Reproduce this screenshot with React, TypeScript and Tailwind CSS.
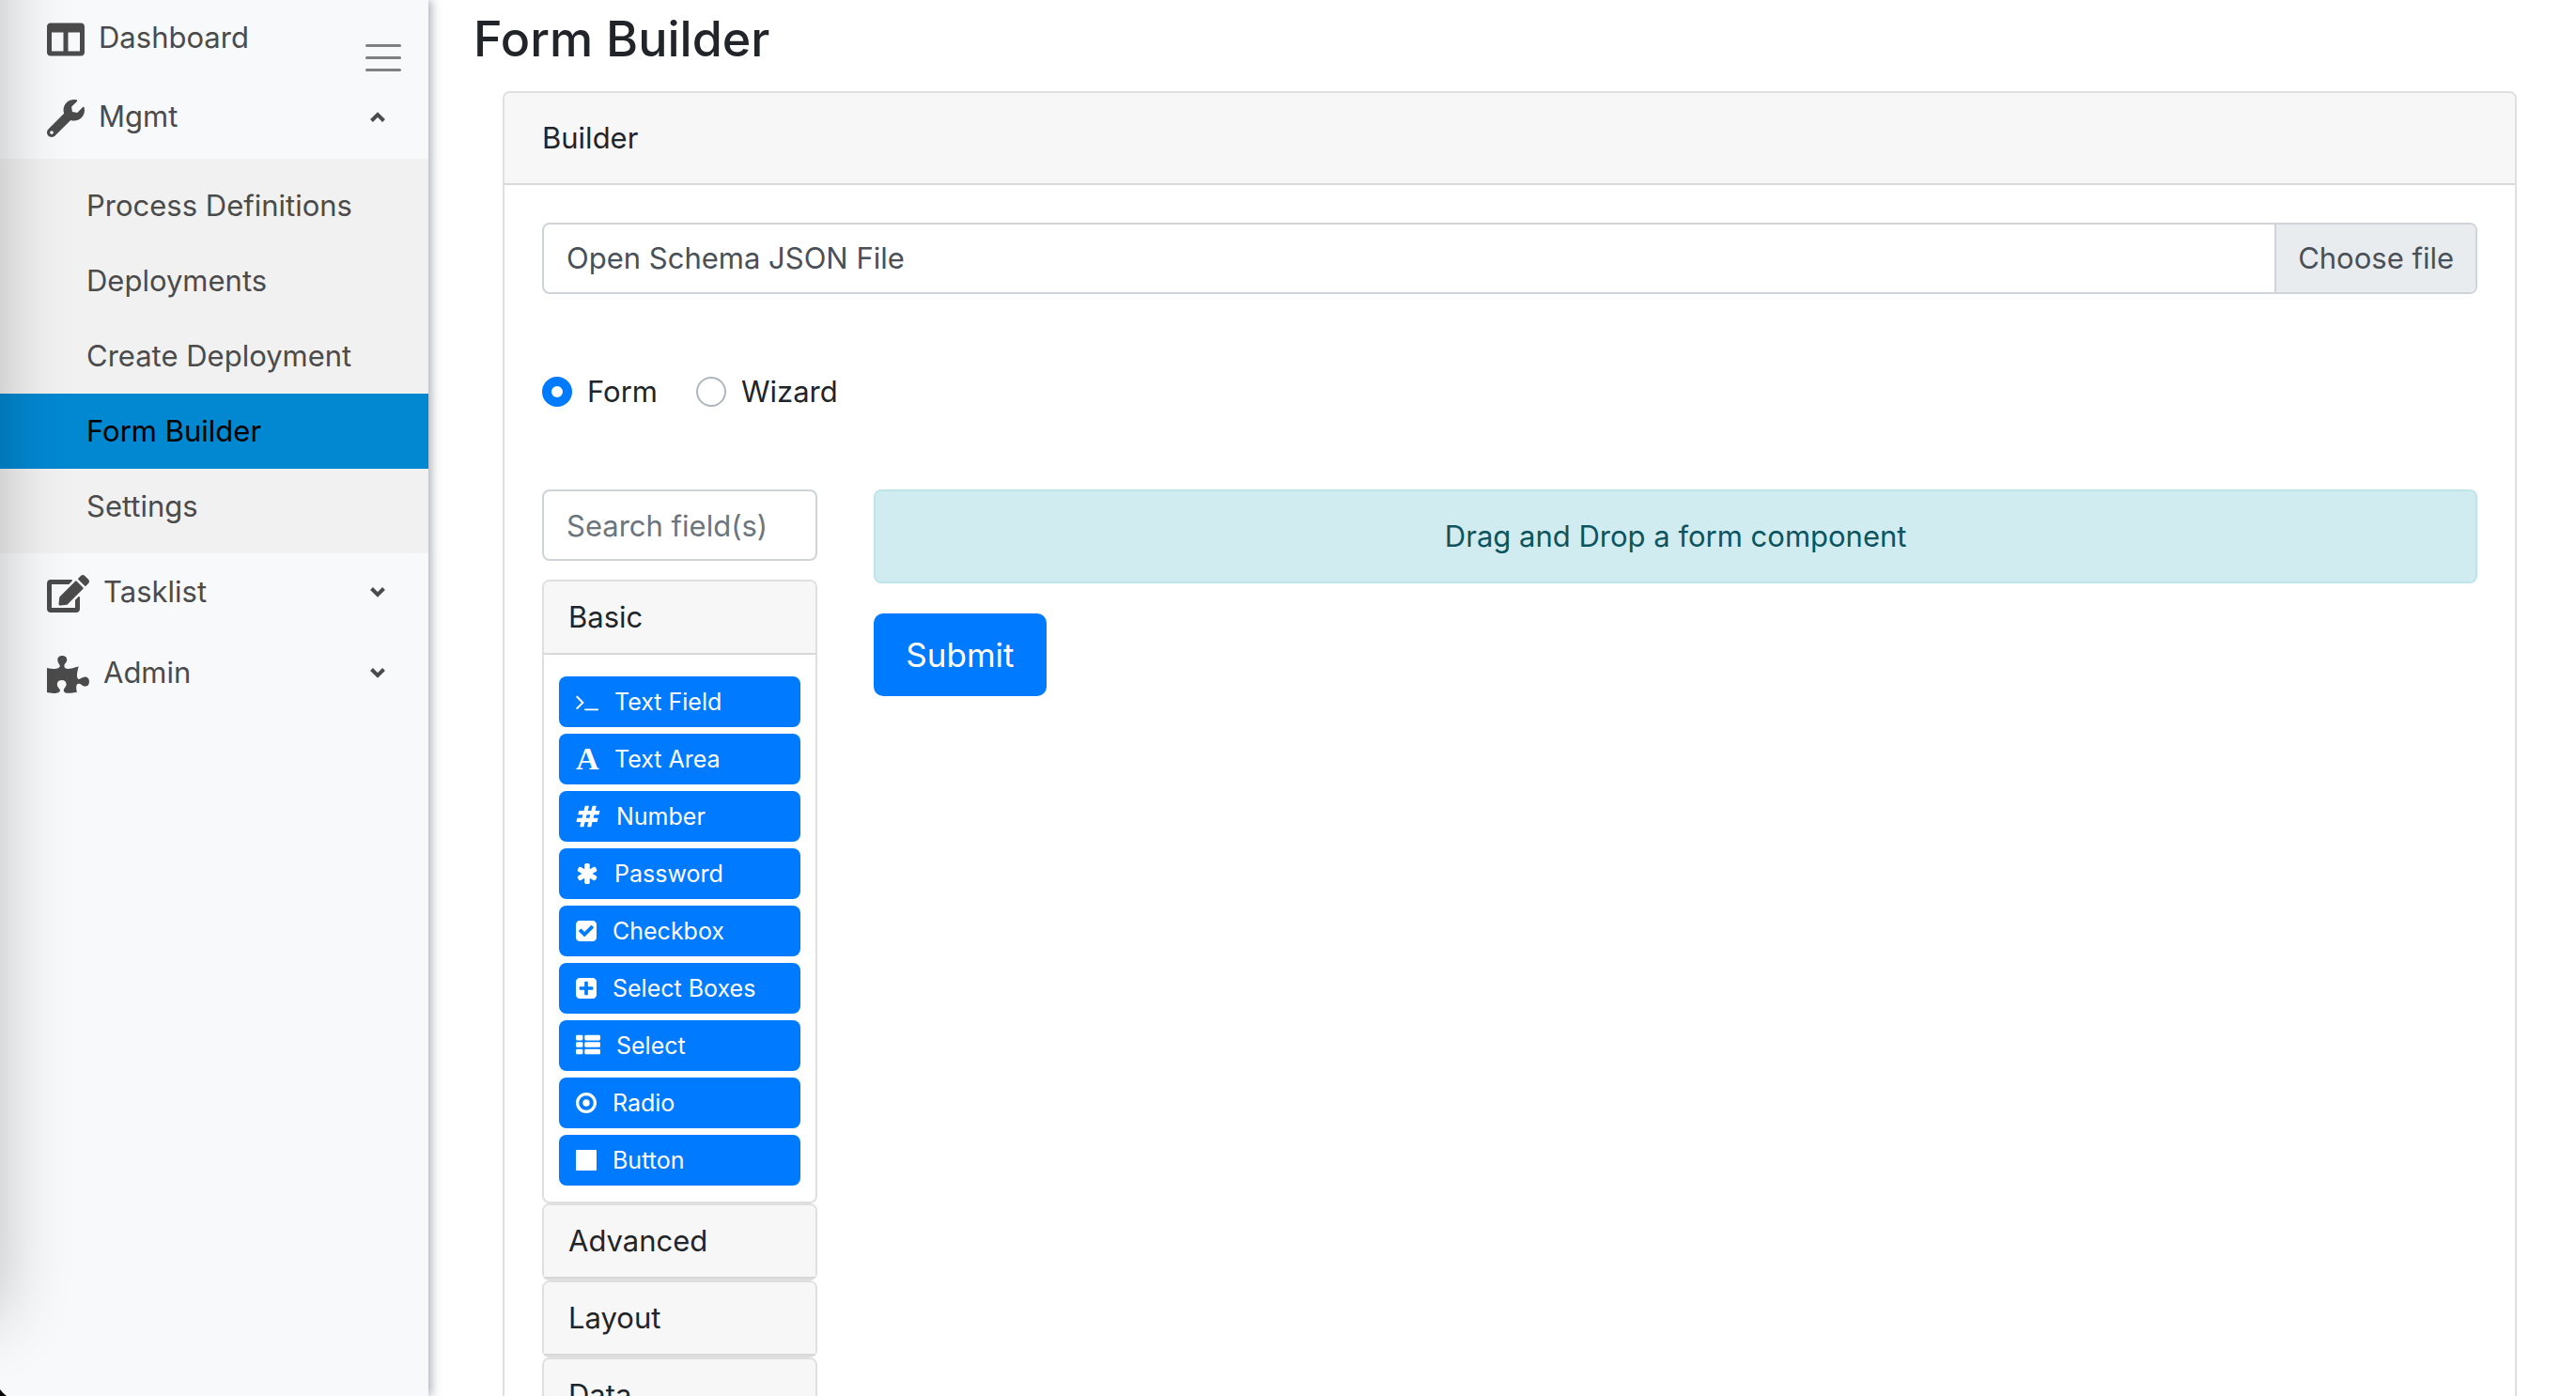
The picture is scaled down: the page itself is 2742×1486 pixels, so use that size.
import React, { useState } from "react";
import { FaColumns, FaEdit, FaPuzzlePiece, FaWrench } from "react-icons/fa";

const SQUARE =
  "M1664 416v960q0 119-84.5 203.5t-203.5 84.5h-960q-119 0-203.5-84.5t-84.5-203.5v-960q0-119 84.5-203.5t203.5-84.5h960q119 0 203.5 84.5t84.5 203.5z";

function Glyph({ box, className, d }: { box: string; className: string; d: string }) {
  return (
    <svg viewBox={box} className={className} fill="currentColor" fillRule="evenodd" aria-hidden="true">
      <path d={d} />
    </svg>
  );
}

const BASIC_FIELDS: { label: string; icon: React.ReactNode }[] = [
  {
    label: "Text Field",
    icon: (
      <Glyph
        box="0 0 1664 1792"
        className="h-[26px] w-6"
        d="M585 983l-466 466q-10 10-23 10t-23-10l-50-50q-10-10-10-23t10-23l393-393-393-393q-10-10-10-23t10-23l50-50q10-10 23-10t23 10l466 466q10 10 10 23t-10 23zM1664 1440v64q0 14-9 23t-23 9h-960q-14 0-23-9t-9-23v-64q0-14 9-23t23-9h960q14 0 23 9t9 23z"
      />
    ),
  },
  {
    label: "Text Area",
    icon: (
      <span
        aria-hidden="true"
        className="w-6 text-center font-['Liberation_Serif',serif] text-[34px] leading-[26px] font-bold"
      >
        A
      </span>
    ),
  },
  {
    label: "Number",
    icon: (
      <Glyph
        box="0 0 1792 1792"
        className="h-[26px] w-[26px]"
        d="M991 1024l64-256h-254l-64 256h254zm768-504l-56 224q-7 24-31 24h-327l-64 256h311q15 0 25 12 10 14 6 28l-56 224q-5 24-31 24h-327l-81 328q-7 24-31 24h-224q-16 0-26-12-9-12-6-28l78-312h-254l-81 328q-7 24-31 24h-225q-15 0-25-12-9-12-6-28l78-312h-311q-15 0-25-12-9-12-6-28l56-224q7-24 31-24h327l64-256h-311q-15 0-25-12-10-14-6-28l56-224q5-24 31-24h327l81-328q7-24 32-24h224q15 0 25 12 9 12 6 28l-78 312h254l81-328q7-24 32-24h224q15 0 25 12 9 12 6 28l-78 312h311q15 0 25 12 9 12 6 28z"
      />
    ),
  },
  {
    label: "Password",
    icon: (
      <Glyph
        box="64 0 1664 1792"
        className="h-[26px] w-6"
        d="M1546 1050q46 26 59.5 77.5t-12.5 97.5l-64 110q-26 46-77.5 59.5t-97.5-12.5l-266-153v307q0 52-38 90t-90 38h-128q-52 0-90-38t-38-90v-307l-266 153q-46 26-97.5 12.5t-77.5-59.5l-64-110q-26-46-12.5-97.5t59.5-77.5l266-154-266-154q-46-26-59.5-77.5t12.5-97.5l64-110q26-46 77.5-59.5t97.5 12.5l266 153v-307q0-52 38-90t90-38h128q52 0 90 38t38 90v307l266-153q46-26 97.5-12.5t77.5 59.5l64 110q26 46 12.5 97.5t-59.5 77.5l-266 154z"
      />
    ),
  },
  {
    label: "Checkbox",
    icon: (
      <Glyph
        box="128 0 1536 1792"
        className="h-[26px] w-[22px]"
        d={
          "M813 1299l614-614q19-19 19-45t-19-45l-102-102q-19-19-45-19t-45 19l-467 467-211-211q-19-19-45-19t-45 19l-102 102q-19 19-19 45t19 45l358 358q19 19 45 19t45-19z" +
          SQUARE
        }
      />
    ),
  },
  {
    label: "Select Boxes",
    icon: (
      <Glyph
        box="128 0 1536 1792"
        className="h-[26px] w-[22px]"
        d={
          "M1408 960v-128q0-26-19-45t-45-19h-320v-320q0-26-19-45t-45-19h-128q-26 0-45 19t-19 45v320h-320q-26 0-45 19t-19 45v128q0 26 19 45t45 19h320v320q0 26 19 45t45 19h128q26 0 45-19t19-45v-320h320q26 0 45-19t19-45z" +
          SQUARE
        }
      />
    ),
  },
  {
    label: "Select",
    icon: (
      <svg viewBox="0 0 1792 1792" className="h-[26px] w-[26px]" fill="currentColor" aria-hidden="true">
        {[128, 640, 1152].map((y) => (
          <React.Fragment key={y}>
            <rect x="0" y={y} width="512" height="384" rx="96" />
            <rect x="640" y={y} width="1152" height="384" rx="96" />
          </React.Fragment>
        ))}
      </svg>
    ),
  },
  {
    label: "Radio",
    icon: (
      <svg viewBox="128 0 1536 1792" className="h-[26px] w-[22px]" aria-hidden="true">
        <circle cx="896" cy="896" r="656" fill="none" stroke="currentColor" strokeWidth="224" />
        <circle cx="896" cy="896" r="256" fill="currentColor" />
      </svg>
    ),
  },
  {
    label: "Button",
    icon: (
      <svg viewBox="128 0 1536 1792" className="h-[26px] w-[22px]" fill="currentColor" aria-hidden="true">
        <rect x="128" y="128" width="1536" height="1536" rx="48" />
      </svg>
    ),
  },
];

const MGMT_ITEMS = ["Process Definitions", "Deployments", "Create Deployment", "Form Builder", "Settings"];

function Chevron({ up = false }: { up?: boolean }) {
  return (
    <svg
      viewBox="0 0 16 11"
      className="mb-1 ml-auto h-[11px] w-4"
      fill="none"
      stroke="currentColor"
      strokeWidth="4"
      aria-hidden="true"
    >
      <path d={up ? "M1.5 9.5 8 3l6.5 6.5" : "M1.5 1.5 8 8l6.5-6.5"} />
    </svg>
  );
}

function NavGroup({ icon, label, up }: { icon: React.ReactNode; label: string; up?: boolean }) {
  return (
    <button type="button" aria-expanded={!!up} className="flex h-[86px] w-full items-center gap-[15px] pr-[46px] pl-[50px]">
      {icon}
      <span className="pb-1">{label}</span>
      <Chevron up={up} />
    </button>
  );
}

function Sidebar() {
  return (
    <aside className="relative z-10 h-full w-[456px] shrink-0 bg-[#f8f9fb] text-[#4b4b4b] shadow-[3px_0_10px_rgba(50,62,80,0.42)]">
      <nav>
        <a href="#dashboard" className="flex h-[83px] items-center gap-[15px] pl-[50px]">
          <FaColumns className="size-10" />
          <span className="pb-1">Dashboard</span>
        </a>
        <NavGroup icon={<FaWrench className="size-10" />} label="Mgmt" up />
        <ul className="bg-[#f1f1f1] py-[10px]">
          {MGMT_ITEMS.map((item) => (
            <li key={item}>
              <a
                href={"#" + item.toLowerCase().replace(" ", "-")}
                className={
                  item === "Form Builder"
                    ? "flex h-20 items-center bg-[#0288d1] pl-[92px] text-black"
                    : "flex h-20 items-center pl-[92px]"
                }
              >
                {item}
              </a>
            </li>
          ))}
        </ul>
        <NavGroup icon={<FaEdit className="h-10 w-[45px]" />} label="Tasklist" />
        <NavGroup icon={<FaPuzzlePiece className="h-10 w-[45px]" />} label="Admin" />
      </nav>
      <button type="button" aria-label="Toggle menu" className="absolute top-[47px] right-[29px] flex flex-col gap-[10px]">
        <span className="h-[3px] w-[38px] rounded-full bg-[#808080]" />
        <span className="h-[3px] w-[38px] rounded-full bg-[#808080]" />
        <span className="h-[3px] w-[38px] rounded-full bg-[#808080]" />
      </button>
      {/* soft shade along the window's left edge */}
      <div className="pointer-events-none absolute inset-0 overflow-hidden">
        <div className="absolute -top-40 right-full bottom-[84px] w-40 shadow-[0_0_76px_rgba(0,0,0,0.24)]" />
        <svg viewBox="0 0 7 7" className="absolute bottom-0 left-0 size-[7px]" aria-hidden="true">
          <path d="M0 0Q3 4 7 7H0z" fill="#000" />
        </svg>
      </div>
    </aside>
  );
}

function Group({ title, children }: { title: string; children?: React.ReactNode }) {
  return (
    <section className="rounded-lg border-2 border-[#dfdfdf] bg-white">
      <h2 className="rounded-t-md border-b-2 border-[#d8d8d8] bg-[#f7f7f7]">
        <button type="button" aria-expanded={!!children} className="block w-full px-[26px] py-[14px] text-left leading-[48px]">
          {title}
        </button>
      </h2>
      {children}
    </section>
  );
}

export default function App() {
  const [display, setDisplay] = useState("Form");

  return (
    <div className="flex h-screen overflow-hidden bg-white font-[Inter,sans-serif] text-[31px] leading-[48px] text-[#212529]">
      <Sidebar />
      <main className="min-w-0 flex-1 pr-[63px] pl-12">
        <h1 className="pt-2 pb-[21px] text-[52px] leading-[68px] font-medium">Form Builder</h1>
        <div className="ml-[31px] rounded-lg border-2 border-[#dfdfdf] bg-white">
          <div className="rounded-t-md border-b-2 border-[#d8d8d8] bg-[#f7f7f7] px-10 py-6">Builder</div>
          <div className="p-10">
            <label
              htmlFor="schema"
              className="flex h-[76px] items-stretch overflow-hidden rounded-lg border-2 border-[#ced4da] leading-[72px] text-[#495057]"
            >
              <span className="flex-1 px-6">Open Schema JSON File</span>
              <span className="border-l-2 border-[#ced4da] bg-[#e9ecef] px-[23px]">Choose file</span>
            </label>
            <input id="schema" type="file" className="sr-only" />

            <div className="flex gap-[41px] py-20">
              {["Form", "Wizard"].map((name) => (
                <label key={name} className="flex items-center gap-4">
                  <input
                    type="radio"
                    name="display"
                    checked={display === name}
                    onChange={() => setDisplay(name)}
                    className="size-8 appearance-none rounded-full border-2 border-[#adb5bd] bg-white checked:border-[10px] checked:border-[#007bff]"
                  />
                  {name}
                </label>
              ))}
            </div>

            <div className="grid grid-cols-12 gap-x-[60px]">
              <div className="col-span-2">
                <input
                  type="search"
                  aria-label="Search field(s)"
                  placeholder="Search field(s)"
                  className="mb-5 block h-[76px] w-full rounded-lg border-2 border-[#ced4da] px-6 placeholder:text-[#6c757d]"
                />
                <Group title="Basic">
                  <div className="flex flex-col gap-[7px] px-4 pt-[23px] pb-[17px]">
                    {BASIC_FIELDS.map(({ label, icon }) => (
                      <button
                        key={label}
                        type="button"
                        className="flex h-[54px] items-center gap-[17px] rounded-lg bg-[#007bff] px-[18px] text-[25px] whitespace-nowrap text-white"
                      >
                        {icon}
                        {label}
                      </button>
                    ))}
                  </div>
                </Group>
                <Group title="Advanced" />
                <Group title="Layout" />
                <Group title="Data" />
              </div>
              <div className="col-span-10">
                <div className="mb-8 rounded-lg border-2 border-[#bee5eb] bg-[#d1ecf1] py-6 text-center text-[#0c5460]">
                  Drag and Drop a form component
                </div>
                <button type="button" className="h-[88px] rounded-[10px] bg-[#007bff] px-[34px] text-[35px] text-white">
                  Submit
                </button>
              </div>
            </div>
          </div>
        </div>
      </main>
    </div>
  );
}
